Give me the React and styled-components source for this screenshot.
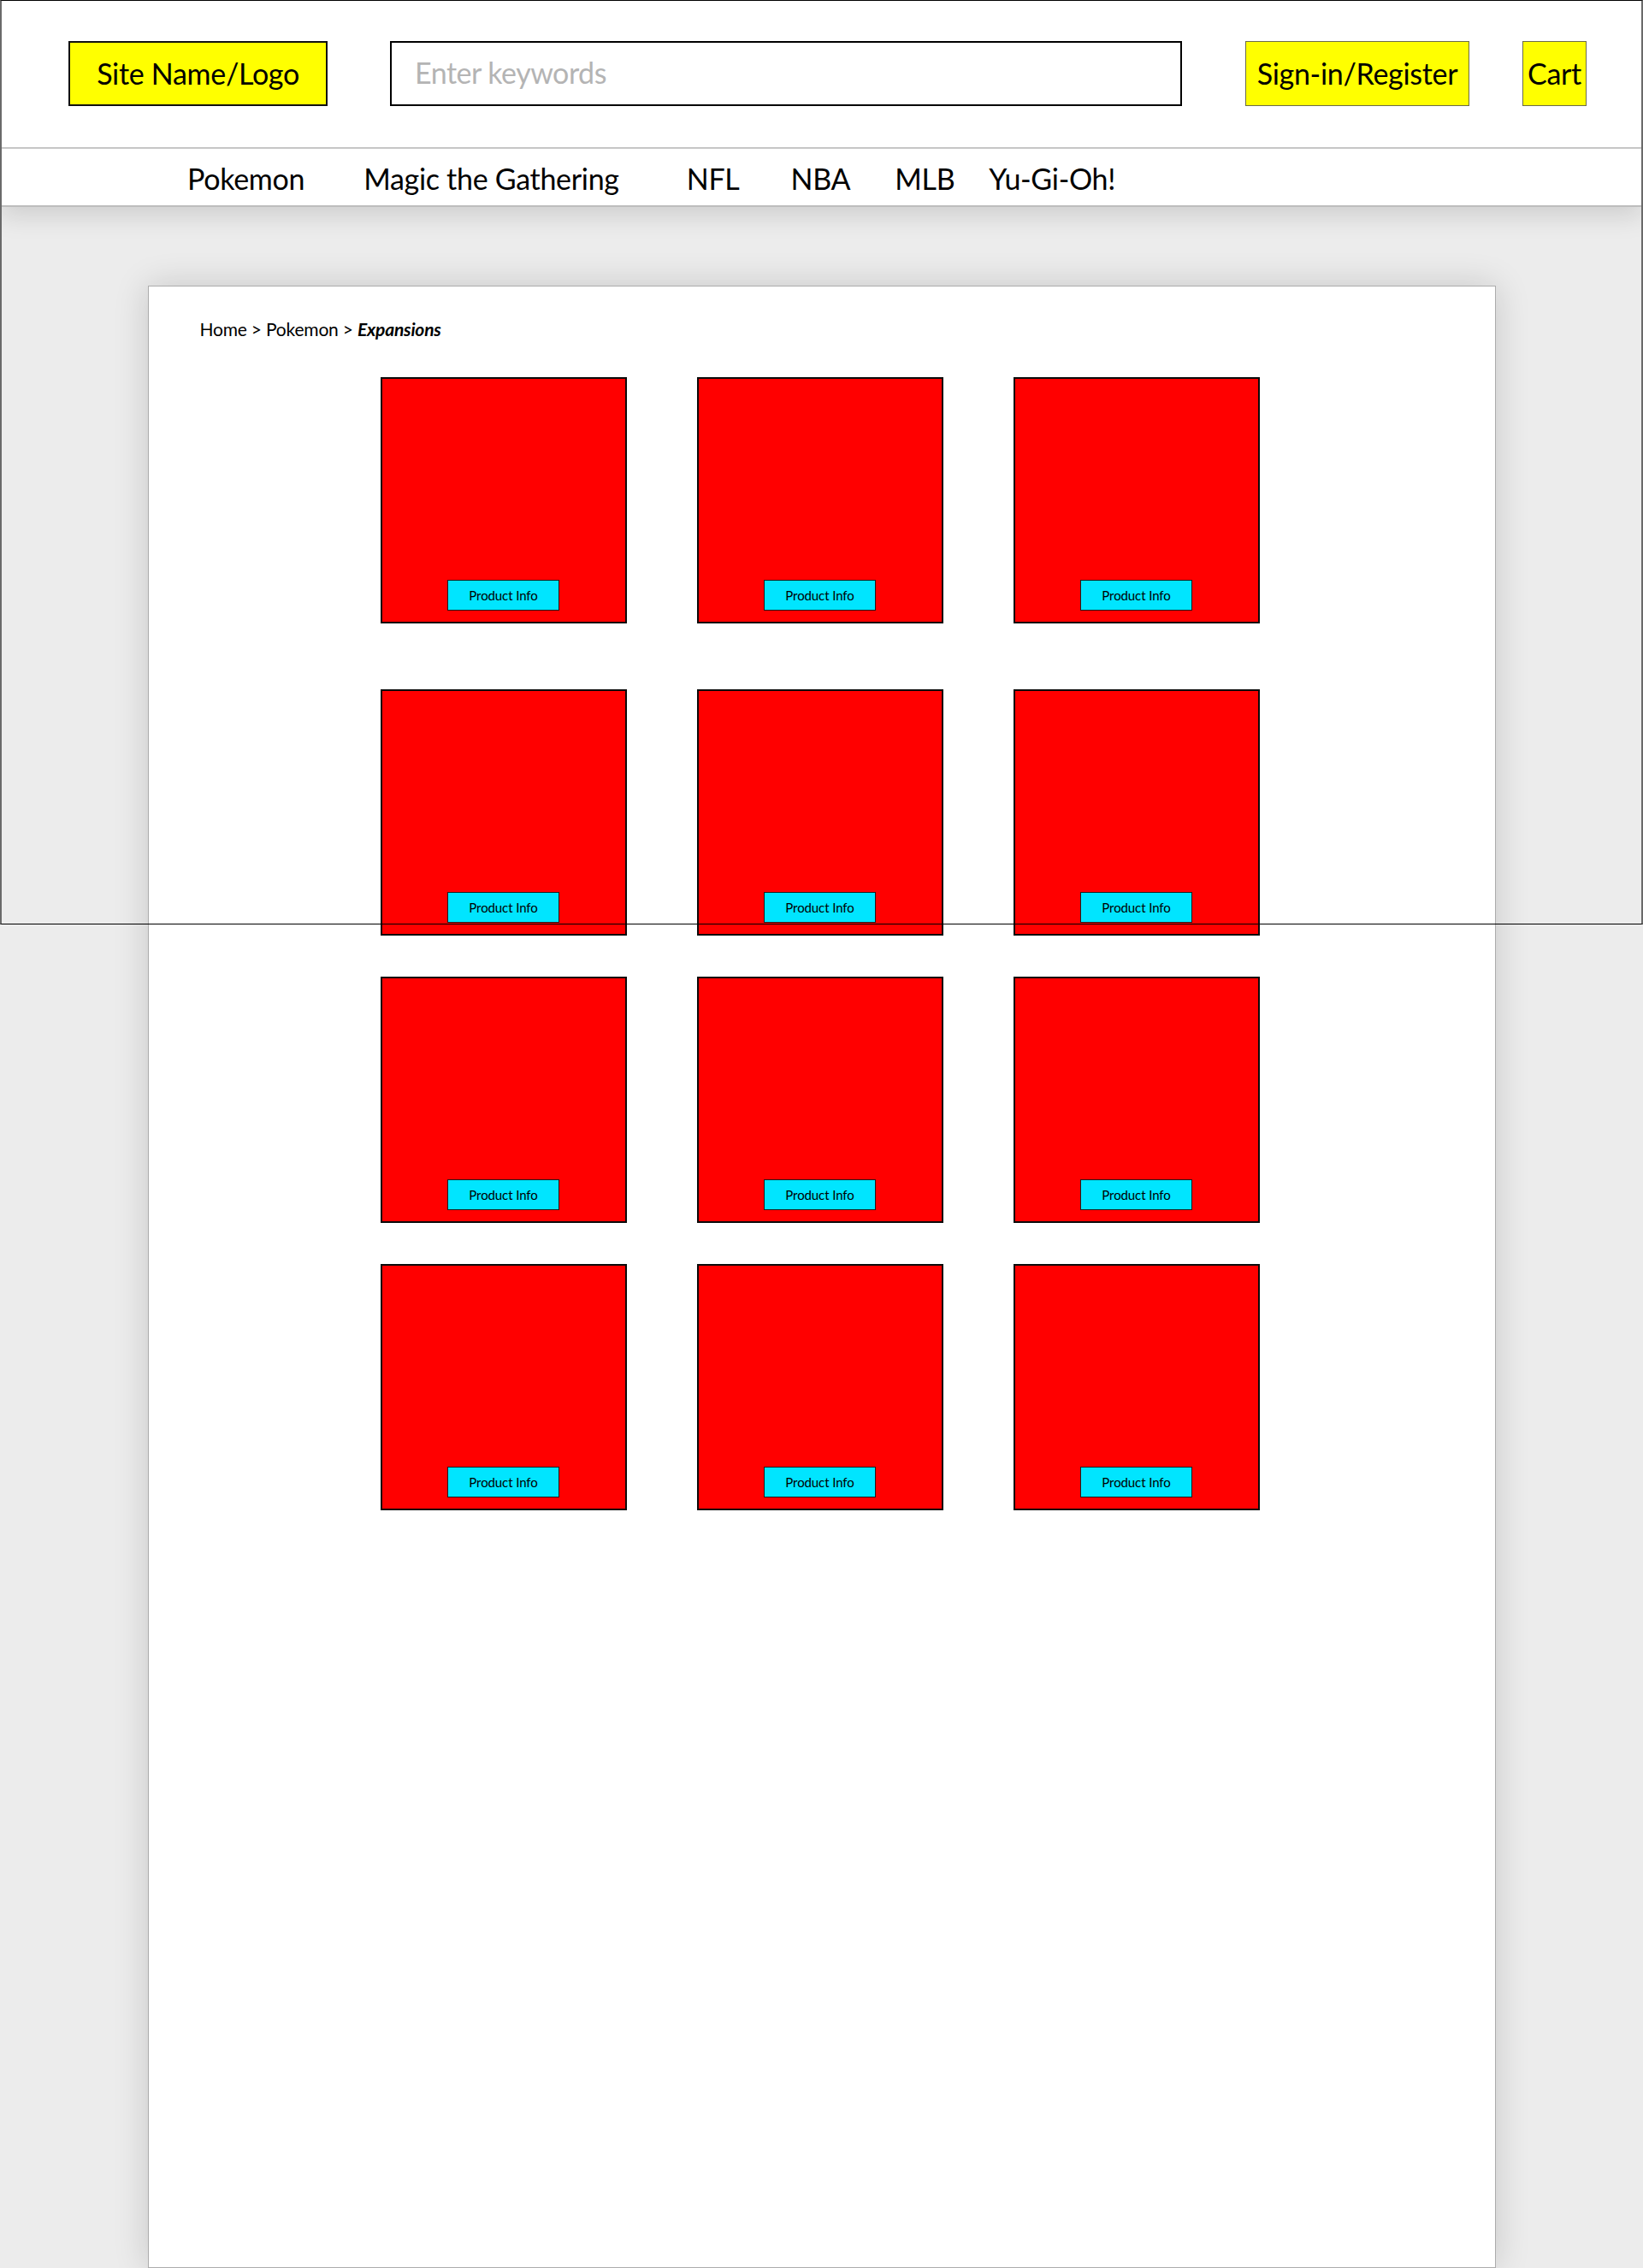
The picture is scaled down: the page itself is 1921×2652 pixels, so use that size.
import React from "react";
import styled, { createGlobalStyle } from "styled-components";

const GlobalStyle = createGlobalStyle`
  html, body {
    margin: 0;
    padding: 0;
    background: #ececec;
    font-family: Lato, "Open Sans", "Noto Sans", sans-serif;
    color: #000;
  }
  * { box-sizing: border-box; }
`;

const Page = styled.div`
  position: relative;
  width: 100%;
  height: 2652px;
  overflow: hidden;
  background: #ececec;
`;

const Header = styled.header`
  position: relative;
  z-index: 2;
  background: #fff;
  box-shadow: 0 10px 28px rgba(0, 0, 0, 0.13);
`;

const TopBar = styled.div`
  height: 174px;
  display: flex;
  align-items: center;
  padding-left: 80px;
  border-bottom: 2px solid #c6c6c6;
`;

const YellowBox = styled.div`
  height: 76px;
  width: ${(p) => p.$w}px;
  margin-left: ${(p) => p.$ml || 0}px;
  background: #ffff00;
  border: ${(p) => (p.$strong ? "2px solid #111" : "1.5px solid #6b6b4a")};
  display: flex;
  align-items: center;
  justify-content: center;
  font-size: 34px;
  line-height: 1;
  white-space: nowrap;
  letter-spacing: -0.3px;
`;

const Search = styled.div`
  height: 76px;
  width: 926px;
  margin-left: 73px;
  border: 2px solid #000;
  background: #fff;
  display: flex;
  align-items: center;
  padding-left: 27px;
  padding-bottom: 3px;
  font-size: 34px;
  color: #b4b4b4;
  letter-spacing: -0.5px;
`;

const NavBar = styled.nav`
  height: 68px;
  display: flex;
  align-items: center;
  padding-left: 219px;
  border-bottom: 2px solid #bdbdbd;
`;

const NavLink = styled.span`
  font-size: 34px;
  line-height: 1;
  margin-left: ${(p) => p.$ml || 0}px;
  white-space: nowrap;
  letter-spacing: -0.3px;
  padding-top: 4px;
`;

const Main = styled.main`
  padding-top: 92px;
  display: flex;
  justify-content: center;
`;

const Card = styled.section`
  width: 1576px;
  height: 2318px;
  background: #fff;
  border: 1px solid #acacac;
  box-shadow: 0 0 38px rgba(0, 0, 0, 0.16);
  padding: 38px 0 0 60px;
`;

const Crumbs = styled.div`
  font-size: 21px;
  line-height: 24px;
  letter-spacing: -0.2px;
`;

const Current = styled.b`
  font-style: italic;
  font-weight: 700;
`;

const Grid = styled.div`
  margin: 44px 0 0 211px;
  display: grid;
  grid-template-columns: repeat(3, 288px);
  column-gap: 82px;
  row-gap: 48px;
`;

const Tile = styled.div`
  height: 288px;
  background: #ff0000;
  border: 2px solid #0a0a0a;
  display: flex;
  flex-direction: column;
  justify-content: flex-end;
  align-items: center;
  padding-bottom: 13px;
  margin-bottom: ${(p) => (p.$firstRow ? 29 : 0)}px;
`;

const InfoButton = styled.div`
  width: 131px;
  height: 36px;
  background: #00e5ff;
  border: 1.5px solid #1c1c1c;
  display: flex;
  align-items: center;
  justify-content: center;
  font-size: 15px;
  letter-spacing: -0.1px;
`;

const Frame = styled.div`
  position: absolute;
  top: 0;
  left: 0;
  width: 1921px;
  height: 1081px;
  border-top: 1px solid #000;
  border-bottom: 1.5px solid #000;
  border-left: 2px solid #6a6a6a;
  border-right: 2px solid #6a6a6a;
  pointer-events: none;
  z-index: 10;
`;

const navItems = [
  { label: "Pokemon", ml: 0 },
  { label: "Magic the Gathering", ml: 69 },
  { label: "NFL", ml: 79 },
  { label: "NBA", ml: 60 },
  { label: "MLB", ml: 52 },
  { label: "Yu-Gi-Oh!", ml: 40 },
];

export default function App() {
  const tiles = Array.from({ length: 12 }, (_, i) => i);
  return (
    <>
      <GlobalStyle />
      <Page>
        <Header>
          <TopBar>
            <YellowBox $w={303} $strong>Site Name/Logo</YellowBox>
            <Search>Enter keywords</Search>
            <YellowBox $w={262} $ml={74}>Sign-in/Register</YellowBox>
            <YellowBox $w={75} $ml={62}>Cart</YellowBox>
          </TopBar>
          <NavBar>
            {navItems.map((n) => (
              <NavLink key={n.label} $ml={n.ml}>{n.label}</NavLink>
            ))}
          </NavBar>
        </Header>
        <Main>
          <Card>
            <Crumbs>
              Home &gt; Pokemon &gt; <Current>Expansions</Current>
            </Crumbs>
            <Grid>
              {tiles.map((i) => (
                <Tile key={i} $firstRow={i < 3}>
                  <InfoButton>Product Info</InfoButton>
                </Tile>
              ))}
            </Grid>
          </Card>
        </Main>
        <Frame />
      </Page>
    </>
  );
}
